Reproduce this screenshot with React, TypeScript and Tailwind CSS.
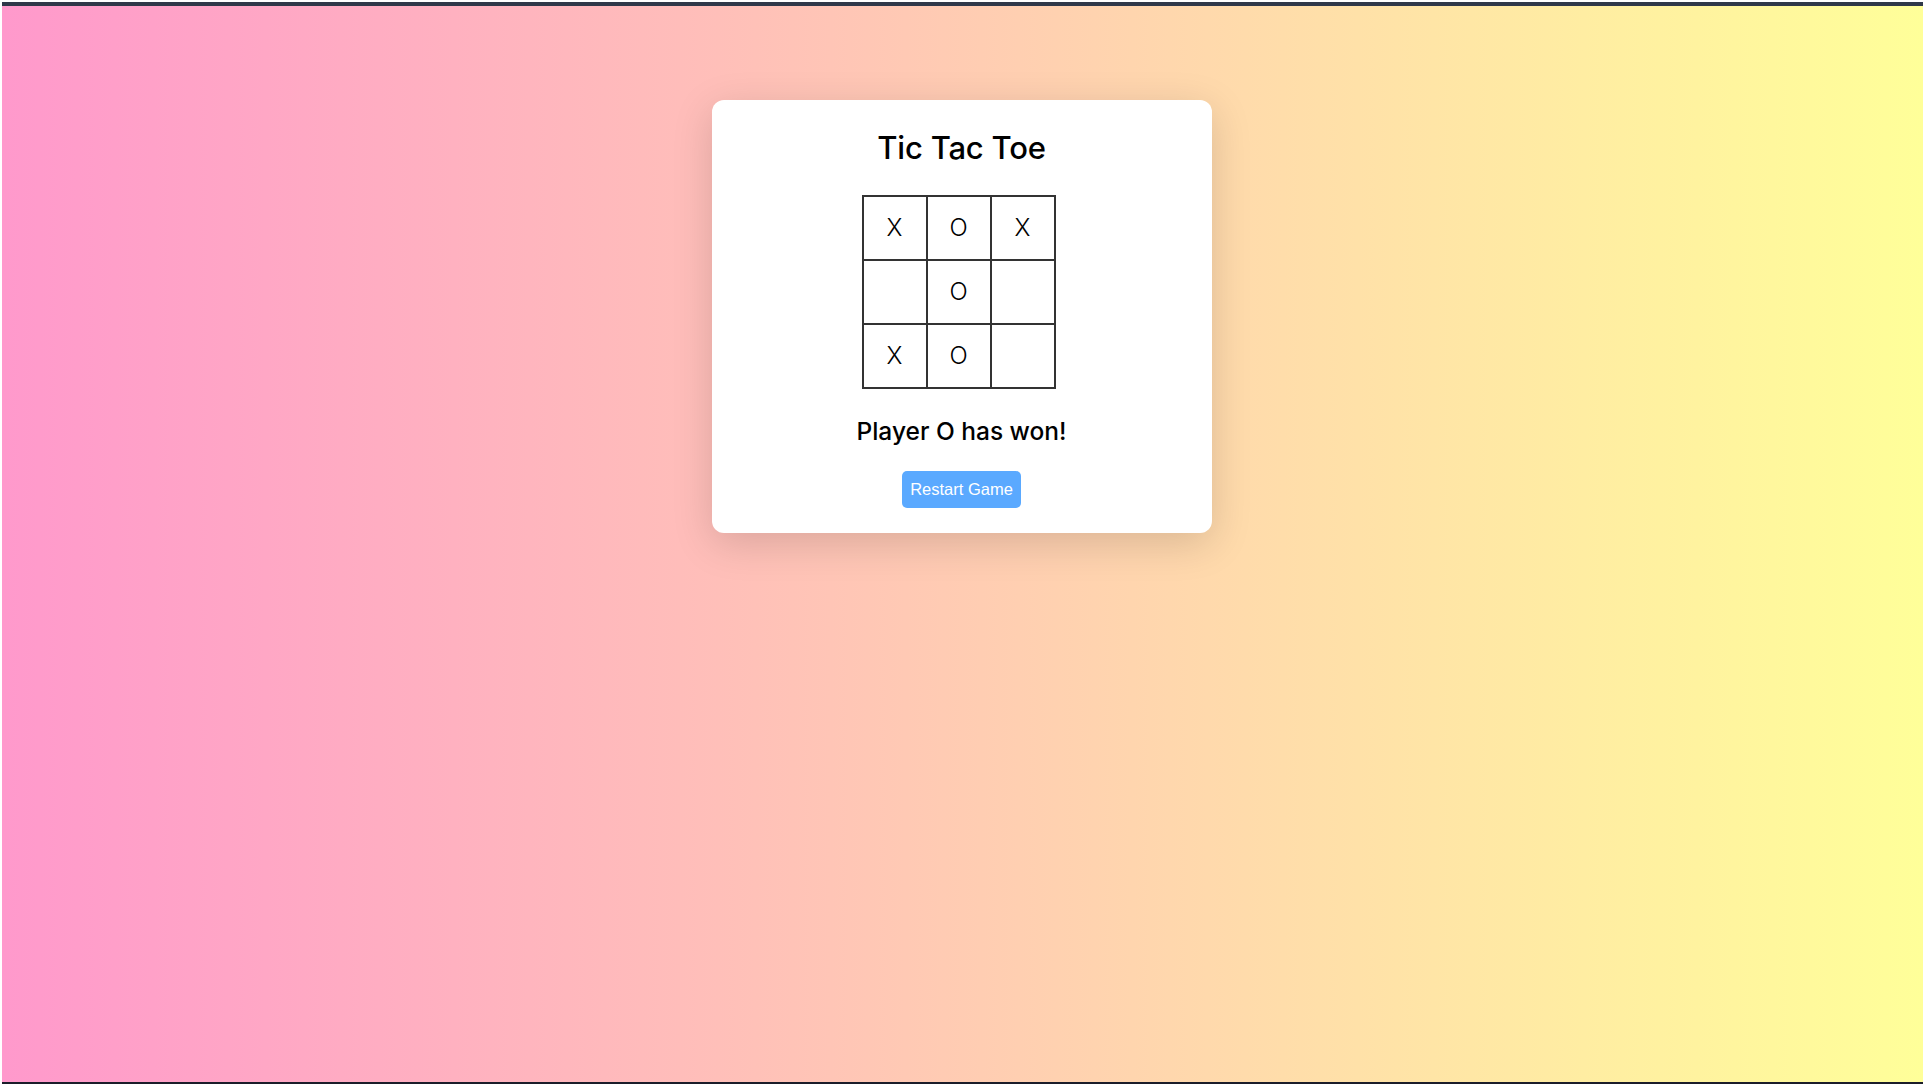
import React from "react";

const board: string[] = ["X", "O", "X", "", "O", "", "X", "O", ""];

export default function App() {
  return (
    <div className="h-[1086px] w-full bg-white pl-[2px] pt-[2px] flex flex-col overflow-hidden" style={{ fontFamily: "Inter, 'Noto Sans', sans-serif" }}>
      <div className="h-[4px] w-full bg-[#2f3849]" />
      <div className="flex-1 bg-[linear-gradient(to_right,#ff99cc,#ffff99)] flex justify-center items-start pt-[94px] pr-[2px]">
        <div className="w-[500px] h-[433px] bg-white rounded-[12px] shadow-[0_10px_40px_rgba(0,0,0,0.15)] flex flex-col items-center pt-[28px]">
          <h1 className="text-[31px] leading-[40px] font-medium text-black tracking-[-0.2px]">Tic Tac Toe</h1>
          <div className="mt-[27px] mr-[6px] grid grid-cols-[repeat(3,64px)] border-l-2 border-t-2 border-[#333333]">
            {board.map((v, i) => (
              <div
                key={i}
                className="h-[64px] border-r-2 border-b-2 border-[#333333] flex items-center justify-center text-[24px] font-light text-black"
              >
                {v}
              </div>
            ))}
          </div>
          <p className="mt-[26px] text-[24.5px] leading-[32px] font-medium text-black">Player O has won!</p>
          <button
            className="mt-[24px] h-[37px] px-[8px] rounded-[5px] bg-[#5aa9ff] text-white text-[16.5px]"
            style={{ fontFamily: "'Liberation Sans', Arial, sans-serif" }}
          >
            Restart Game
          </button>
        </div>
      </div>
      <div className="h-[2px] w-full bg-[#1b1d2a]" />
      <div className="h-[2px] w-full bg-white" />
    </div>
  );
}
